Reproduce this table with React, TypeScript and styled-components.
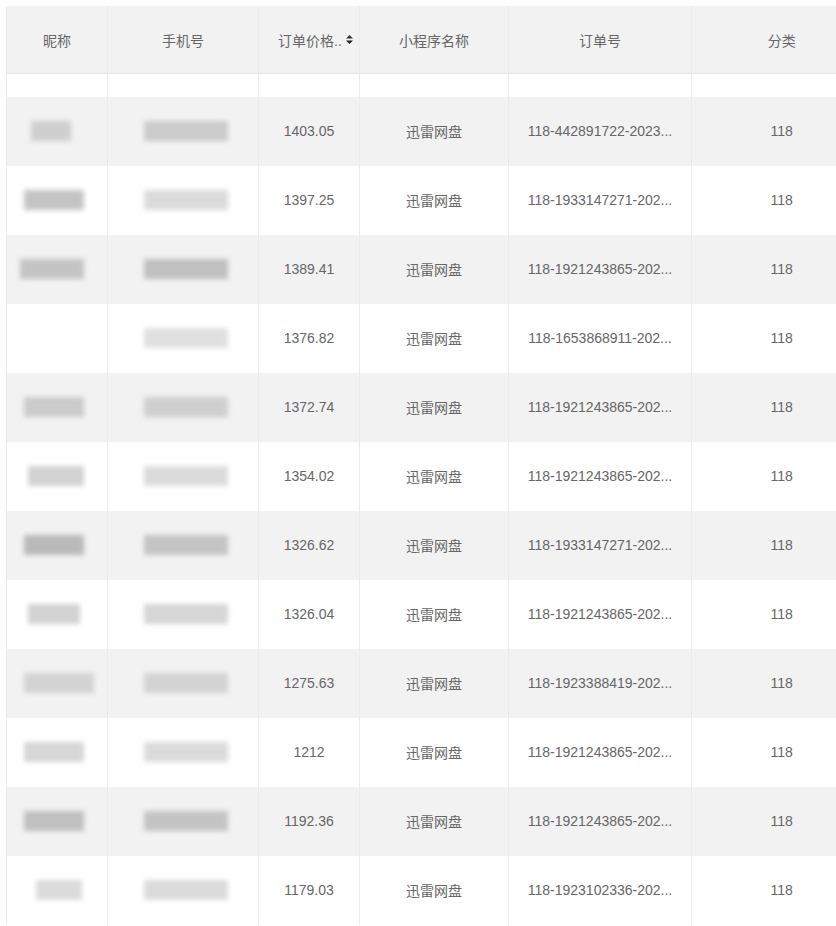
import styled, { createGlobalStyle } from "styled-components";

type OrderType = {
  nameW: number;
  nameX: number;
  nameTone: number;
  phoneTone: number;
  price: string;
  app: string;
  orderNo: string;
  category: string;
};

const orders: OrderType[] = [
  { nameW: 40, nameX: -6, nameTone: 0.45, phoneTone: 0.5, price: "1403.05", app: "迅雷网盘", orderNo: "118-442891722-2023...", category: "118" },
  { nameW: 60, nameX: -3, nameTone: 0.65, phoneTone: 0.4, price: "1397.25", app: "迅雷网盘", orderNo: "118-1933147271-202...", category: "118" },
  { nameW: 64, nameX: -5, nameTone: 0.6, phoneTone: 0.65, price: "1389.41", app: "迅雷网盘", orderNo: "118-1921243865-202...", category: "118" },
  { nameW: 0, nameX: 0, nameTone: 0, phoneTone: 0.35, price: "1376.82", app: "迅雷网盘", orderNo: "118-1653868911-202...", category: "118" },
  { nameW: 60, nameX: -3, nameTone: 0.5, phoneTone: 0.45, price: "1372.74", app: "迅雷网盘", orderNo: "118-1921243865-202...", category: "118" },
  { nameW: 56, nameX: -1, nameTone: 0.5, phoneTone: 0.4, price: "1354.02", app: "迅雷网盘", orderNo: "118-1921243865-202...", category: "118" },
  { nameW: 60, nameX: -3, nameTone: 0.75, phoneTone: 0.6, price: "1326.62", app: "迅雷网盘", orderNo: "118-1933147271-202...", category: "118" },
  { nameW: 52, nameX: -3, nameTone: 0.5, phoneTone: 0.45, price: "1326.04", app: "迅雷网盘", orderNo: "118-1921243865-202...", category: "118" },
  { nameW: 70, nameX: 2, nameTone: 0.4, phoneTone: 0.4, price: "1275.63", app: "迅雷网盘", orderNo: "118-1923388419-202...", category: "118" },
  { nameW: 60, nameX: -3, nameTone: 0.45, phoneTone: 0.4, price: "1212", app: "迅雷网盘", orderNo: "118-1921243865-202...", category: "118" },
  { nameW: 60, nameX: -3, nameTone: 0.65, phoneTone: 0.6, price: "1192.36", app: "迅雷网盘", orderNo: "118-1921243865-202...", category: "118" },
  { nameW: 46, nameX: 2, nameTone: 0.4, phoneTone: 0.4, price: "1179.03", app: "迅雷网盘", orderNo: "118-1923102336-202...", category: "118" },
];

function SortIcon() {
  return (
    <svg width="9" height="11" viewBox="0 0 9 11">
      <path d="M4.5 1 L8 4.5 L1 4.5 Z" fill="#333" />
      <path d="M4.5 10 L8 6.5 L1 6.5 Z" fill="#222" />
    </svg>
  );
}

function App() {
  return (
    <>
      <GlobalStyle />
      <StyledWrap>
        <StyledTable>
          <colgroup>
            <col style={{ width: 101 }} />
            <col style={{ width: 151 }} />
            <col style={{ width: 101 }} />
            <col style={{ width: 149 }} />
            <col style={{ width: 183 }} />
            <col style={{ width: 180 }} />
          </colgroup>
          <thead>
            <tr>
              <StyledTh>昵称</StyledTh>
              <StyledTh>手机号</StyledTh>
              <StyledTh>
                <StyledSortLabel>
                  订单价格..
                  <SortIcon />
                </StyledSortLabel>
              </StyledTh>
              <StyledTh>小程序名称</StyledTh>
              <StyledTh>订单号</StyledTh>
              <StyledTh>分类</StyledTh>
            </tr>
          </thead>
          <tbody>
            <StyledSpacerRow>
              <td />
              <td />
              <td />
              <td />
              <td />
              <td />
            </StyledSpacerRow>
            {orders.map((order, i) => (
              <StyledRow key={i} $striped={i % 2 === 0}>
                <StyledTd>
                  {order.nameW > 0 && (
                    <StyledBlur
                      $width={order.nameW}
                      $shift={order.nameX}
                      $tone={order.nameTone}
                    />
                  )}
                </StyledTd>
                <StyledTd>
                  <StyledBlur $width={84} $shift={3} $tone={order.phoneTone} />
                </StyledTd>
                <StyledTd>{order.price}</StyledTd>
                <StyledTd>{order.app}</StyledTd>
                <StyledTd>{order.orderNo}</StyledTd>
                <StyledTd>{order.category}</StyledTd>
              </StyledRow>
            ))}
          </tbody>
        </StyledTable>
      </StyledWrap>
    </>
  );
}

const GlobalStyle = createGlobalStyle`
  html, body {
    margin: 0;
    padding: 0;
    background: #ffffff;
    overflow: hidden;
  }
  body {
    font-family: "Liberation Sans", "Noto Sans CJK SC", sans-serif;
    color: #666666;
  }
`;

const StyledWrap = styled.div`
  width: 836px;
  height: 926px;
  padding: 6px 0 0 6px;
  box-sizing: border-box;
  overflow: hidden;
`;

const StyledTable = styled.table`
  table-layout: fixed;
  width: 865px;
  border-collapse: collapse;
  font-size: 14px;
`;

const StyledTh = styled.th`
  height: 67px;
  padding: 0;
  background: #f2f2f2;
  font-weight: 400;
  color: #666666;
  text-align: center;
  border-left: 1px solid #ebebeb;
  border-bottom: 1px solid #e6e6e6;
`;

const StyledSortLabel = styled.span`
  display: inline-flex;
  align-items: center;
  gap: 3px;
  margin-left: 14px;
`;

const StyledSpacerRow = styled.tr`
  height: 23px;

  td {
    padding: 0;
    border-left: 1px solid #ebebeb;
    background: #ffffff;
  }
`;

const StyledRow = styled.tr<{ $striped: boolean }>`
  height: 69px;
  background: ${(p) => (p.$striped ? "#f2f2f2" : "#ffffff")};
`;

const StyledTd = styled.td`
  padding: 0 8px;
  text-align: center;
  color: #666666;
  white-space: nowrap;
  overflow: hidden;
  border-left: 1px solid #ebebeb;
`;

const StyledBlur = styled.div<{ $width: number; $shift: number; $tone: number }>`
  width: ${(p) => p.$width}px;
  height: 20px;
  margin: 0 auto;
  transform: translateX(${(p) => p.$shift}px);
  background: rgba(165, 165, 165, ${(p) => p.$tone});
  filter: blur(2.5px);
`;

export default App;
